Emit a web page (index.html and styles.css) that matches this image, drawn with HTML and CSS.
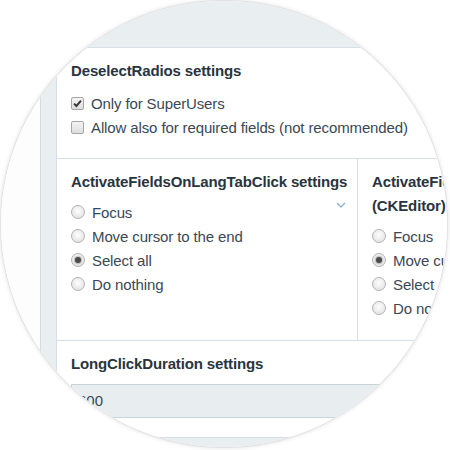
FILE: index.html
```html
<!DOCTYPE html>
<html>
<head>
<meta charset="utf-8">
<link rel="stylesheet" href="styles.css">
</head>
<body>
<div class="lens">
  <div class="page">
    <div class="sidebar"></div>
    <div class="main">
      <div class="panel">
        <div class="section">
          <div class="heading">DeselectRadios settings</div>
          <div class="row"><span class="check checked"><svg width="11" height="11" viewBox="0 0 11 11"><path d="M2 5.6 L4.4 8 L9 2.6" fill="none" stroke="#3a3a3a" stroke-width="2"/></svg></span><span class="label">Only for SuperUsers</span></div>
          <div class="row"><span class="check"></span><span class="label">Allow also for required fields (not recommended)</span></div>
        </div>
        <div class="cols">
          <div class="col">
            <div class="heading">ActivateFieldsOnLangTabClick settings</div>
            <svg class="chevron" width="10" height="6" viewBox="0 0 10 6"><path d="M1 1 L5 5 L9 1" fill="none" stroke="#8db2cf" stroke-width="1.3"/></svg>
            <div class="row"><span class="radio"></span><span class="label">Focus</span></div>
            <div class="row"><span class="radio"></span><span class="label">Move cursor to the end</span></div>
            <div class="row"><span class="radio on"></span><span class="label">Select all</span></div>
            <div class="row"><span class="radio"></span><span class="label">Do nothing</span></div>
          </div>
          <div class="col">
            <div class="heading">ActivateFieldsOnLangTabClick settings (CKEditor)</div>
            <div class="row"><span class="radio"></span><span class="label">Focus</span></div>
            <div class="row"><span class="radio on"></span><span class="label">Move cursor to the end</span></div>
            <div class="row"><span class="radio"></span><span class="label">Select all</span></div>
            <div class="row"><span class="radio"></span><span class="label">Do nothing</span></div>
          </div>
        </div>
        <div class="section last">
          <div class="heading">LongClickDuration settings</div>
          <div class="field">600</div>
        </div>
      </div>
    </div>
  </div>
</div>
</body>
</html>
```
FILE: styles.css
```css
html, body {
  margin: 0;
  padding: 0;
  background: #ffffff;
}
body {
  width: 450px;
  height: 450px;
  overflow: hidden;
  font-family: "Liberation Sans", Arial, sans-serif;
  font-size: 15px;
  color: #3a4855;
}
.lens {
  width: 446px;
  height: 446px;
  margin: 1px 0 0 1px;
  border-radius: 50%;
  overflow: hidden;
  box-shadow: 0 0 0 1px #e2e2e2, 0 0 4px 1px rgba(0, 0, 0, 0.12);
  background: #ffffff;
}
.page {
  display: flex;
  width: 760px;
  height: 446px;
}
.sidebar {
  width: 39px;
  flex: none;
  background: #fdfdfd;
}
.main {
  flex: 1;
  background: #e9eef1;
  border-left: 1px solid #d5dde3;
  padding: 46px 0 0 15px;
}
.panel {
  width: 640px;
  background: #ffffff;
  border: 1px solid #d6dfe5;
}
.section {
  padding: 11px 15px 19px 14px;
  border-bottom: 1px solid #d6dfe5;
}
.section.last {
  border-bottom: none;
  padding-bottom: 19px;
}
.heading {
  font-weight: bold;
  line-height: 24px;
  color: #28343e;
  letter-spacing: -0.14px;
  margin-bottom: 8px;
}
.col .heading {
  margin-bottom: 6px;
}
.row {
  display: flex;
  align-items: center;
  height: 24px;
  gap: 7px;
}
.label {
  white-space: nowrap;
  letter-spacing: -0.12px;
}
.check {
  width: 11px;
  height: 11px;
  border: 1px solid #a6a6a6;
  border-radius: 2px;
  background: linear-gradient(#f4f4f4, #dedede);
  display: flex;
  align-items: center;
  justify-content: center;
  flex: none;
}
.check svg {
  display: block;
}
.radio {
  width: 12px;
  height: 12px;
  border: 1px solid #b3b3b3;
  border-radius: 50%;
  background: radial-gradient(circle at 50% 40%, #fdfdfd 0%, #ececec 55%, #d8d8d8 100%);
  flex: none;
  position: relative;
}
.radio.on::after {
  content: "";
  position: absolute;
  left: 3px;
  top: 3px;
  width: 6px;
  height: 6px;
  border-radius: 50%;
  background: #4a4a4a;
  box-shadow: 0 0 1px 1px rgba(80, 80, 80, 0.35);
}
.cols {
  display: grid;
  grid-template-columns: 301px 301px;
  border-bottom: 1px solid #d6dfe5;
}
.col {
  position: relative;
  padding: 11px 4px 20px 14px;
  border-right: 1px solid #d6dfe5;
}
.chevron {
  position: absolute;
  top: 43px;
  right: 11px;
}
.field {
  height: 32px;
  width: 560px;
  line-height: 32px;
  padding-left: 6px;
  background: #e8edf0;
  border: 1px solid #c9d3da;
  color: #3a4855;
}
```
